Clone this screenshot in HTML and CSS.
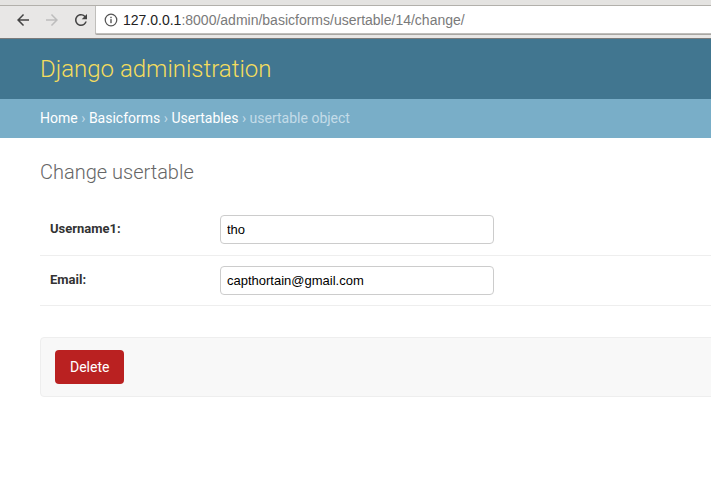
FILE: index.html
```html
<!DOCTYPE html>
<html lang="en">
<head>
<meta charset="utf-8">
<title>Change usertable | Django site admin</title>
<link rel="stylesheet" href="styles.css">
</head>
<body>
<div class="chrome">
  <div class="tabstrip"></div>
  <div class="toolbar">
    <span class="navbtn">
      <svg width="18" height="18" viewBox="0 0 24 24"><path fill="#444" d="M20 11H7.830l5.59-5.59L12 4l-8 8 8 8 1.41-1.41L7.830 13H20v-2z"/></svg>
    </span>
    <span class="navbtn">
      <svg width="18" height="18" viewBox="0 0 24 24"><path fill="#bdbdbd" d="M4 11h12.17l-5.59-5.59L12 4l8 8-8 8-1.41-1.41L16.17 13H4v-2z"/></svg>
    </span>
    <span class="navbtn">
      <svg width="18" height="18" viewBox="0 0 24 24"><path fill="#444" d="M17.65 6.35A7.958 7.958 0 0 0 12 4c-4.42 0-7.990 3.58-7.990 8s3.57 8 7.990 8c3.73 0 6.84-2.55 7.73-6h-2.08A5.990 5.990 0 0 1 12 18c-3.31 0-6-2.69-6-6s2.69-6 6-6c1.660 0 3.14.69 4.22 1.780L13 11h7V4l-2.35 2.35z"/></svg>
    </span>
    <div class="omnibox">
      <svg class="info" width="14" height="14" viewBox="0 0 16 16"><circle cx="8" cy="8" r="6.6" fill="none" stroke="#555" stroke-width="1.4"/><rect x="7.2" y="7" width="1.6" height="4.6" fill="#555"/><rect x="7.2" y="4.3" width="1.6" height="1.6" fill="#555"/></svg>
      <span class="host">127.0.0.1</span><span class="path">:8000/admin/basicforms/usertable/14/change/</span>
    </div>
  </div>
</div>

<div class="page">
  <div class="header">
    <h1 class="branding">Django administration</h1>
  </div>
  <div class="breadcrumbs">
    <a href="#">Home</a> <span class="sep">&rsaquo;</span> <a href="#">Basicforms</a> <span class="sep">&rsaquo;</span> <a href="#">Usertables</a> <span class="sep">&rsaquo;</span> usertable object
  </div>
  <div class="content">
    <h1 class="title">Change usertable</h1>
    <form>
      <fieldset class="module">
        <div class="form-row">
          <label class="required" for="id_username1">Username1:</label>
          <input class="vTextField" id="id_username1" type="text" value="tho">
        </div>
        <div class="form-row">
          <label class="required" for="id_email">Email:</label>
          <input class="vTextField" id="id_email" type="text" value="capthortain@gmail.com">
        </div>
      </fieldset>
      <div class="submit-row">
        <a href="#" class="deletelink">Delete</a>
      </div>
    </form>
  </div>
</div>
</body>
</html>
```

FILE: styles.css
```css
html, body {
  margin: 0;
  padding: 0;
  overflow: hidden;
  background: #fff;
}

.chrome {
  background: #e8e7e6;
  border-bottom: 1px solid #7b7b7b;
}

.tabstrip {
  height: 5px;
  background: #e4e3e1;
  border-bottom: 1px solid #b2b0ab;
}

.toolbar {
  display: flex;
  align-items: flex-start;
  height: 32px;
  padding-left: 8px;
}

.navbtn {
  width: 29px;
  height: 27px;
  display: flex;
  align-items: center;
  justify-content: center;
}

.omnibox {
  flex: 1;
  height: 27px;
  background: #fff;
  border: 1px solid #c0bfbc;
  border-top: none;
  border-right: none;
  border-radius: 0 0 0 2px;
  display: flex;
  align-items: center;
  padding-left: 7px;
  font-family: "Liberation Sans", Arial, sans-serif;
  font-size: 14px;
  box-shadow: 0 1px 0 #a9a7a3;
}

.info {
  margin-right: 5px;
  margin-left: 1px;
}

.host { color: #222; }
.path { color: #7a7a7a; }

.page {
  font-family: Roboto, "Liberation Sans", sans-serif;
  color: #333;
  font-size: 14px;
}

.header {
  background: #417690;
  padding: 10px 40px;
}

.branding {
  margin: 0;
  font-size: 24px;
  line-height: 40px;
  font-weight: 300;
  color: #f5dd5d;
}

.breadcrumbs {
  background: #79aec8;
  padding: 10px 40px;
  line-height: 19px;
  color: #c4dce8;
  font-size: 14px;
}

.breadcrumbs a {
  color: #fff;
  text-decoration: none;
}

.sep { color: #c4dce8; }

.content {
  padding: 20px 0 20px 40px;
}

.title {
  margin: 0 0 19px;
  font-size: 20px;
  font-weight: 300;
  color: #666;
  line-height: 28px;
}

.module {
  border: none;
  margin: 0 0 31px;
  padding: 0;
}

.form-row {
  display: flex;
  align-items: flex-start;
  padding: 10px;
  border-bottom: 1px solid #eee;
  font-size: 13px;
}

.form-row:first-child {
  padding-bottom: 11px;
}

.form-row label {
  width: 160px;
  padding: 6px 10px 0 0;
  font-weight: bold;
  color: #333;
  line-height: 16px;
}

.vTextField {
  box-sizing: border-box;
  width: 274px;
  height: 29px;
  border: 1px solid #ccc;
  border-radius: 4px;
  padding: 5px 6px;
  font-family: "Liberation Sans", Arial, sans-serif;
  font-size: 13px;
  color: #000;
  margin: 0;
}

.submit-row {
  display: flex;
  padding: 12px 14px;
  background: #f8f8f8;
  border: 1px solid #eee;
  border-radius: 4px;
  margin-right: -10px;
}

.deletelink {
  display: block;
  background: #ba2121;
  color: #fff;
  border-radius: 4px;
  padding: 0 15px;
  height: 34px;
  line-height: 34px;
  font-size: 14px;
  text-decoration: none;
}
```
